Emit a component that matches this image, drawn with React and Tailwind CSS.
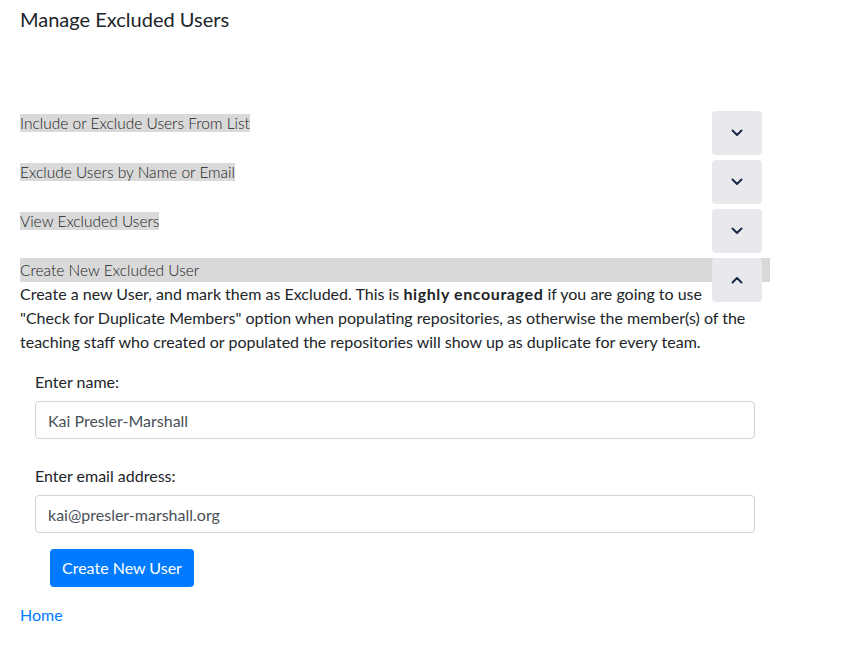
import React from 'react';

const font = { fontFamily: 'Lato, "Noto Sans", sans-serif' };

function Chevron({ up }) {
  return (
    <svg width="12" height="8" viewBox="0 0 12 8" className="mx-auto">
      <path
        d={up ? 'M1.5 6.5 L6 2 L10.5 6.5' : 'M1.5 1.5 L6 6 L10.5 1.5'}
        fill="none"
        stroke="#1c2a48"
        strokeWidth="2"
        strokeLinecap="round"
        strokeLinejoin="round"
      />
    </svg>
  );
}

function ToggleButton({ up }) {
  return (
    <button
      className={
        'float-right mr-2 flex h-[44px] w-[50px] items-center justify-center rounded-[4px] bg-[#e9e9ed] ' +
        (up ? 'mb-0' : 'mb-[5px]')
      }
    >
      <Chevron up={up} />
    </button>
  );
}

function CollapsedSection({ title }) {
  return (
    <div className="flow-root">
      <ToggleButton />
      <span className="bg-[#d9d9d9] text-[15.5px] leading-[24px] font-light text-[#222]">{title}</span>
    </div>
  );
}

export default function App() {
  return (
    <div className="min-h-screen bg-white text-[#212529]" style={font}>
      <div className="w-[750px] ml-5">
        <h1 className="pt-[4px] text-[20px] leading-[30px] font-normal">Manage Excluded Users</h1>

        <div className="mt-[77px]">
          <CollapsedSection title="Include or Exclude Users From List" />
          <CollapsedSection title="Exclude Users by Name or Email" />
          <CollapsedSection title="View Excluded Users" />

          <div>
            <div className="h-[24px] bg-[#d9d9d9] text-[15.5px] leading-[24px] font-light text-[#222]">
              <ToggleButton up />
              Create New Excluded User
            </div>
            <p className="text-[16px] leading-[24px]">
              Create a new User, and mark them as Excluded. This is{' '}
              <b className="tracking-[0.6px]">highly encouraged</b> if you are going to use
              "Check for Duplicate Members" option when populating repositories, as otherwise the member(s) of the
              teaching staff who created or populated the repositories will show up as duplicate for every team.
            </p>

            <form className="mt-4 px-[15px] text-[16px] leading-[24px]">
              <div className="mb-4">
                <label className="mb-[7px] block">Enter name:</label>
                <input
                  readOnly
                  value="Kai Presler-Marshall"
                  className="block h-[38px] w-full rounded-[4px] border border-[#ced4da] px-3 text-[#495057]"
                  style={font}
                />
              </div>
              <div className="pt-[9px] mb-4">
                <label className="mb-[7px] block">Enter email address:</label>
                <input
                  readOnly
                  value="kai@presler-marshall.org"
                  className="block h-[38px] w-full rounded-[4px] border border-[#ced4da] px-3 text-[#495057]"
                  style={font}
                />
              </div>
              <button
                type="button"
                className="ml-[15px] h-[38px] rounded-[4px] bg-[#007bff] px-3 text-white"
              >
                Create New User
              </button>
            </form>

            <a href="#" className="mt-4 block leading-[24px] text-[#007bff]">Home</a>
          </div>
        </div>
      </div>
    </div>
  );
}
